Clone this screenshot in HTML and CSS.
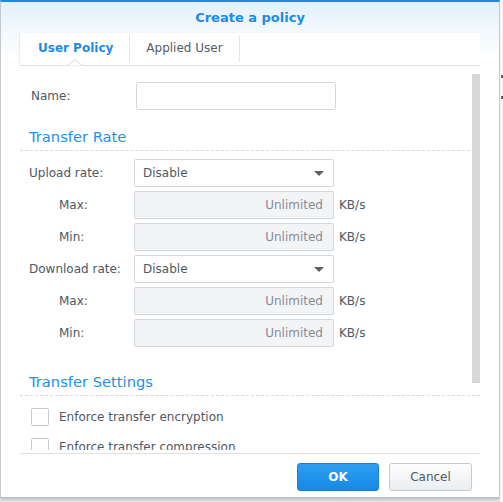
FILE: index.html
```html
<!DOCTYPE html>
<html>
<head>
<meta charset="utf-8">
<link rel="stylesheet" href="styles.css">
</head>
<body>
<div class="dialog">
  <div class="header">Create a policy</div>
  <div class="tabs">
    <div class="tab active">User Policy
      <svg class="caret" width="14" height="7" viewBox="0 0 14 7"><path d="M0 6.5 L7 0.5 L14 6.5" fill="#fff" stroke="#d3d8dd" stroke-width="1"/></svg>
    </div>
    <div class="tab">Applied User</div>
  </div>
  <div class="scroll">
    <div class="thumb"></div>
    <div class="row name-row">
      <div class="label">Name:</div>
      <div class="field"></div>
    </div>
    <div class="section first">Transfer Rate</div>
    <div class="rows">
      <div class="row">
        <div class="label">Upload rate:</div>
        <div class="field select">Disable<span class="arrow"></span></div>
      </div>
      <div class="row">
        <div class="label sub">Max:</div>
        <div class="field disabled">Unlimited</div>
        <div class="unit">KB/s</div>
      </div>
      <div class="row">
        <div class="label sub">Min:</div>
        <div class="field disabled">Unlimited</div>
        <div class="unit">KB/s</div>
      </div>
      <div class="row">
        <div class="label">Download rate:</div>
        <div class="field select">Disable<span class="arrow"></span></div>
      </div>
      <div class="row">
        <div class="label sub">Max:</div>
        <div class="field disabled">Unlimited</div>
        <div class="unit">KB/s</div>
      </div>
      <div class="row">
        <div class="label sub">Min:</div>
        <div class="field disabled">Unlimited</div>
        <div class="unit">KB/s</div>
      </div>
    </div>
    <div class="section second">Transfer Settings</div>
    <div class="checks">
      <div class="check"><span class="box"></span>Enforce transfer encryption</div>
      <div class="check"><span class="box"></span>Enforce transfer compression</div>
    </div>
  </div>
  <div class="footer">
    <div class="btn ok">OK</div>
    <div class="btn cancel">Cancel</div>
  </div>
</div>
<div class="behind"><span class="dot d1"></span><span class="dot d2"></span></div>
</body>
</html>
```
FILE: styles.css
```css
html, body {
  margin: 0;
  padding: 0;
}
body {
  width: 503px;
  height: 502px;
  overflow: hidden;
  background: #e9eaeb;
  display: flex;
  align-items: flex-start;
  font-family: "DejaVu Sans", Verdana, sans-serif;
  font-size: 12px;
  color: #4e5862;
}
.dialog {
  box-sizing: border-box;
  width: 500px;
  height: 498px;
  flex: none;
  background: #fff;
  border-top: 2px solid #1f8ae2;
  border-left: 1px solid #c4c9cd;
  border-right: 1px solid #c4c9cd;
  border-bottom: 1px solid #b9bec3;
  box-shadow: 0 2px 3px rgba(0,0,0,0.18);
  display: flex;
  flex-direction: column;
  background-image: linear-gradient(#e4f0fb 0px, #f3f9fe 30px, #ffffff 60px);
  background-repeat: no-repeat;
}
.header {
  height: 31px;
  line-height: 31px;
  text-align: center;
  font-size: 13px;
  font-weight: bold;
  color: #1f8ae2;
}
.tabs {
  margin: 0 19px;
  padding-left: 2px;
  height: 32px;
  border-bottom: 1px solid #dde1e5;
  background: #fff;
  box-shadow: -1px 0 1px rgba(0,0,0,0.06);
  display: flex;
  align-items: flex-start;
}
.tab {
  position: relative;
  box-sizing: border-box;
  white-space: nowrap;
  line-height: 27px;
  height: 27px;
  margin-top: 2px;
  padding: 0 16px;
  color: #555d66;
  border-right: 1px solid #e3e6e9;
}
.tab.active {
  color: #1f8ae2;
  font-weight: bold;
}
.caret {
  position: absolute;
  left: 46px;
  top: 24px;
}
.scroll {
  position: relative;
  height: 384px;
  flex: none;
  margin: 0 19px;
  overflow: hidden;
  padding-left: 9px;
}
.thumb {
  position: absolute;
  right: 0;
  top: 8px;
  width: 8px;
  height: 309px;
  background: #d7d8d9;
}
.row {
  display: flex;
  align-items: center;
  height: 28px;
}
.name-row {
  margin-top: 16px;
  padding-left: 2px;
}
.label {
  width: 105px;
  flex: none;
  line-height: 28px;
}
.label.sub {
  box-sizing: border-box;
  padding-left: 30px;
}
.field {
  box-sizing: border-box;
  width: 200px;
  height: 28px;
  border: 1px solid #d3d8dd;
  border-radius: 2px;
  background: #fff;
  line-height: 26px;
  padding: 0 10px 0 8px;
  color: #505a64;
}
.field.select {
  display: flex;
  align-items: center;
  justify-content: space-between;
}
.arrow {
  width: 0;
  height: 0;
  border-left: 5px solid transparent;
  border-right: 5px solid transparent;
  border-top: 5px solid #5a6068;
  margin-right: -1px;
}
.field.disabled {
  background: #f2f4f6;
  color: #868e96;
  text-align: right;
}
.unit {
  margin-left: 5px;
  color: #4e5862;
}
.section {
  margin-left: -9px;
  padding-left: 9px;
  font-size: 14.7px;
  line-height: 20px;
  color: #2690e6;
  padding-bottom: 3px;
  border-bottom: 1px dashed #cfd9e2;
}
.section.first {
  margin-top: 17px;
}
.section.second {
  margin-top: 25px;
}
.rows {
  margin-top: 8px;
  display: flex;
  flex-direction: column;
  gap: 4px;
}
.checks {
  margin-top: 12px;
  display: flex;
  flex-direction: column;
  gap: 12px;
  padding-left: 2px;
}
.check {
  display: flex;
  align-items: center;
  height: 18px;
  line-height: 18px;
}
.box {
  box-sizing: border-box;
  width: 18px;
  height: 18px;
  border: 1px solid #c5cbd1;
  border-radius: 2px;
  background: #fff;
  margin-right: 10px;
  flex: none;
}
.footer {
  flex: 1;
  border-top: 1px solid #dfe2e5;
  margin: 3px 19px 0;
  display: flex;
  justify-content: flex-end;
  align-items: flex-start;
  padding-top: 9px;
  padding-right: 8px;
  gap: 10px;
}
.btn {
  box-sizing: border-box;
  height: 28px;
  line-height: 26px;
  text-align: center;
  border-radius: 3px;
  font-size: 12px;
}
.btn.ok {
  width: 82px;
  background: linear-gradient(#2d9ef2, #1789e5);
  border: 1px solid #1a80d6;
  color: #fff;
  font-weight: bold;
}
.btn.cancel {
  width: 83px;
  background: linear-gradient(#fdfdfe, #eaeef2);
  border: 1px solid #c5cbd1;
  color: #515a63;
}
.behind {
  flex: 1;
  height: 502px;
  background: #f7f7f7;
  position: relative;
}
.dot {
  position: absolute;
  left: 1px;
  width: 3px;
  height: 3px;
  background: #555;
  border-radius: 1px;
}
.d1 { top: 75px; }
.d2 { top: 96px; }
```
